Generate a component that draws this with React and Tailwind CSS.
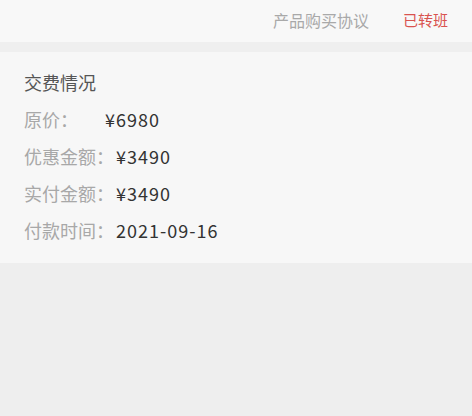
import React from "react";

const font = { fontFamily: '"Noto Sans CJK SC", "Noto Sans", sans-serif' };

function Row({ label, value, labelW }) {
  return (
    <div className="flex h-[37px] items-center text-[18px] leading-none">
      <span className={`text-[#a8a8a8] ${labelW || ""}`}>{label}</span>
      <span className="ml-[2px] tracking-[1px] text-[#333333]">{value}</span>
    </div>
  );
}

export default function App() {
  return (
    <div className="min-h-[416px] w-[472px] bg-[#eeeeee]" style={font}>
      <div className="flex h-[42px] items-center justify-end gap-[34px] bg-[#f8f8f8] pr-[24px] pb-[2px] text-[16px]">
        <span className="text-[#a9a9a9]">产品购买协议</span>
        <span className="text-[15px] text-[#d9534f]">已转班</span>
      </div>
      <div className="h-[10px] bg-[#efefef]" />
      <div className="bg-[#f7f7f7] pl-[24px] pt-[18px] pb-[15px]">
        <div className="mb-[6px] h-[24px] text-[18px] leading-[24px] text-[#555555]">交费情况</div>
        <Row label="原价：" value="¥6980" labelW="w-[79px]" />
        <Row label="优惠金额：" value="¥3490" />
        <Row label="实付金额：" value="¥3490" />
        <Row label="付款时间：" value="2021-09-16" />
      </div>
    </div>
  );
}
